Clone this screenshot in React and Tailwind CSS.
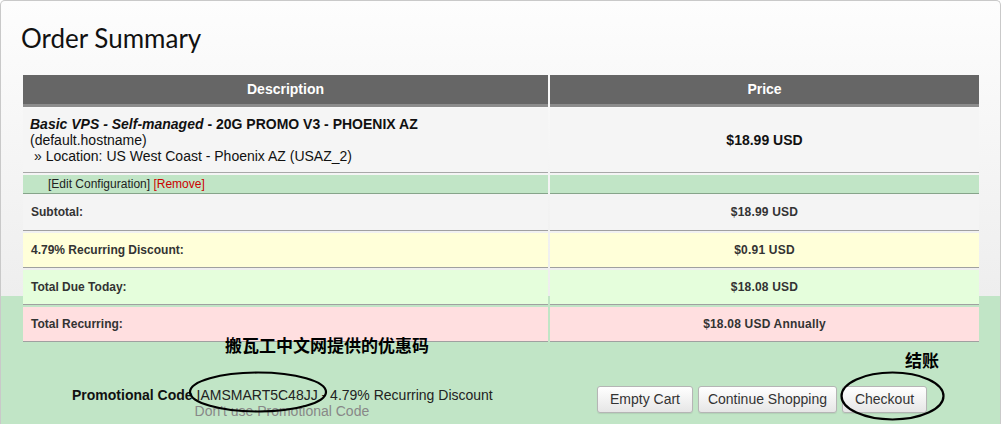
const SUMMARY = [
  { label: 'Subtotal:', value: '$18.99 USD', bg: 'bg-[#f4f4f4]', h: 'h-[37px]', mt: 'mt-0' },
  { label: '4.79% Recurring Discount:', value: '$0.91 USD', bg: 'bg-[#ffffd9]', h: 'h-[35px]', mt: 'mt-[2px]' },
  { label: 'Total Due Today:', value: '$18.08 USD', bg: 'bg-[#e5fedc]', h: 'h-[35px]', mt: 'mt-[2px]' },
  { label: 'Total Recurring:', value: '$18.08 USD Annually', bg: 'bg-[#ffdfe0]', h: 'h-[35px]', mt: 'mt-[2px]' },
]

function Button({ children, width }) {
  return (
    <button
      className={`h-[27px] ${width} rounded-[3px] border border-[#b5b5b5] bg-[linear-gradient(to_bottom,#ffffff,#e6e6e6)] text-[14px] text-[#333] shadow-[0_1px_1px_rgba(0,0,0,0.08)]`}
    >
      {children}
    </button>
  )
}

export default function App() {
  return (
    <div className="font-['Liberation_Sans',Arial,sans-serif] text-[#222]">
      <div className="relative w-[1001px] h-[424px] overflow-hidden rounded-t-[5px] border-l border-t border-r border-[#c9c9c9] bg-[linear-gradient(to_bottom,#fdfdfd_0px,#eeeeee_295px,#c1e5c6_295px)] pl-[22px] pr-[20px] pt-[21px]">
        <h1 className="h-[32px] font-['Lato',sans-serif] text-[26px] leading-[32px] text-[#111] -ml-[2px]">
          Order Summary
        </h1>

        {/* Cart table */}
        <div className="mt-[21px] w-[956px]">
          <div className="flex gap-[2px]">
            <div className="w-[525px] h-[32px] flex items-center justify-center bg-[#666] border-b-[3px] border-[#8c8c8c] text-white font-bold text-[14px]">
              Description
            </div>
            <div className="flex-1 h-[32px] flex items-center justify-center bg-[#666] border-b-[3px] border-[#8c8c8c] text-white font-bold text-[14px]">
              Price
            </div>
          </div>

          <div className="mt-px flex gap-[2px]">
            <div className="w-[525px] h-[65px] bg-[#f5f5f5] border-b border-[#a8a8a8] pt-[8px] pl-[7px] text-[14px] leading-[16px] text-[#111]">
              <div className="font-bold">
                <i>Basic VPS - Self-managed</i> - 20G PROMO V3 - PHOENIX AZ
              </div>
              <div>(default.hostname)</div>
              <div className="pl-[4px]">» Location: US West Coast - Phoenix AZ (USAZ_2)</div>
            </div>
            <div className="flex-1 h-[65px] bg-[#f5f5f5] border-b border-[#a8a8a8] flex items-center justify-center font-bold text-[14px] text-[#111]">
              $18.99 USD
            </div>
          </div>

          <div className="mt-[2px] flex gap-[2px]">
            <div className="w-[525px] h-[19px] bg-[#c1e5c6] border-b border-[#86a48a] pl-[25px] text-[12px] leading-[18px] text-[#222]">
              [Edit Configuration] <span className="text-[#cc0000]">[Remove]</span>
            </div>
            <div className="flex-1 h-[19px] bg-[#c1e5c6] border-b border-[#86a48a]" />
          </div>

          {SUMMARY.map((row) => (
            <div key={row.label} className={`${row.mt} flex gap-[2px]`}>
              <div className={`w-[525px] ${row.h} ${row.bg} border-b border-[#a0a0a0] flex items-center pl-[8px] font-bold text-[12px] text-[#333]`}>
                {row.label}
              </div>
              <div className={`flex-1 ${row.h} ${row.bg} border-b border-[#a0a0a0] flex items-center justify-center font-bold text-[12px] text-[#333] tracking-[0.2px]`}>
                {row.value}
              </div>
            </div>
          ))}
        </div>

        {/* Promo + actions */}
        <div className="mt-[44px] flex items-start w-[956px]">
          <div className="ml-[49px] flex text-[14px] leading-[16px] pt-[1px]">
            <span className="font-bold text-[#111]">Promotional Code</span>
            <div className="ml-[2px]">
              <div className="ml-[2px] text-[#222]">IAMSMART5C48JJ - 4.79% Recurring Discount</div>
              <div className="text-[#888]">Don't use Promotional Code</div>
            </div>
          </div>
          <div className="ml-auto mr-[52px] flex gap-[5px]">
            <Button width="w-[96px]">Empty Cart</Button>
            <Button width="w-[139px]">Continue Shopping</Button>
            <Button width="w-[85px]">Checkout</Button>
          </div>
        </div>

        {/* Annotations */}
        <div className="absolute left-[224px] top-[333px] font-['Noto_Sans_CJK_SC',sans-serif] font-bold text-[17px] leading-[22px] text-black">
          搬瓦工中文网提供的优惠码
        </div>
        <div className="absolute left-[904px] top-[348px] font-['Noto_Sans_CJK_SC',sans-serif] font-bold text-[17px] leading-[22px] text-black">
          结账
        </div>
        <svg className="absolute left-[186px] top-[369px]" width="142" height="44" viewBox="0 0 142 44">
          <ellipse cx="71" cy="22" rx="68" ry="19.5" fill="none" stroke="#000" strokeWidth="2.2" />
        </svg>
        <svg className="absolute left-[838px] top-[369px]" width="107" height="52" viewBox="0 0 107 52">
          <ellipse cx="53.5" cy="26" rx="51" ry="23.5" fill="none" stroke="#000" strokeWidth="2.2" />
        </svg>
      </div>
    </div>
  )
}
